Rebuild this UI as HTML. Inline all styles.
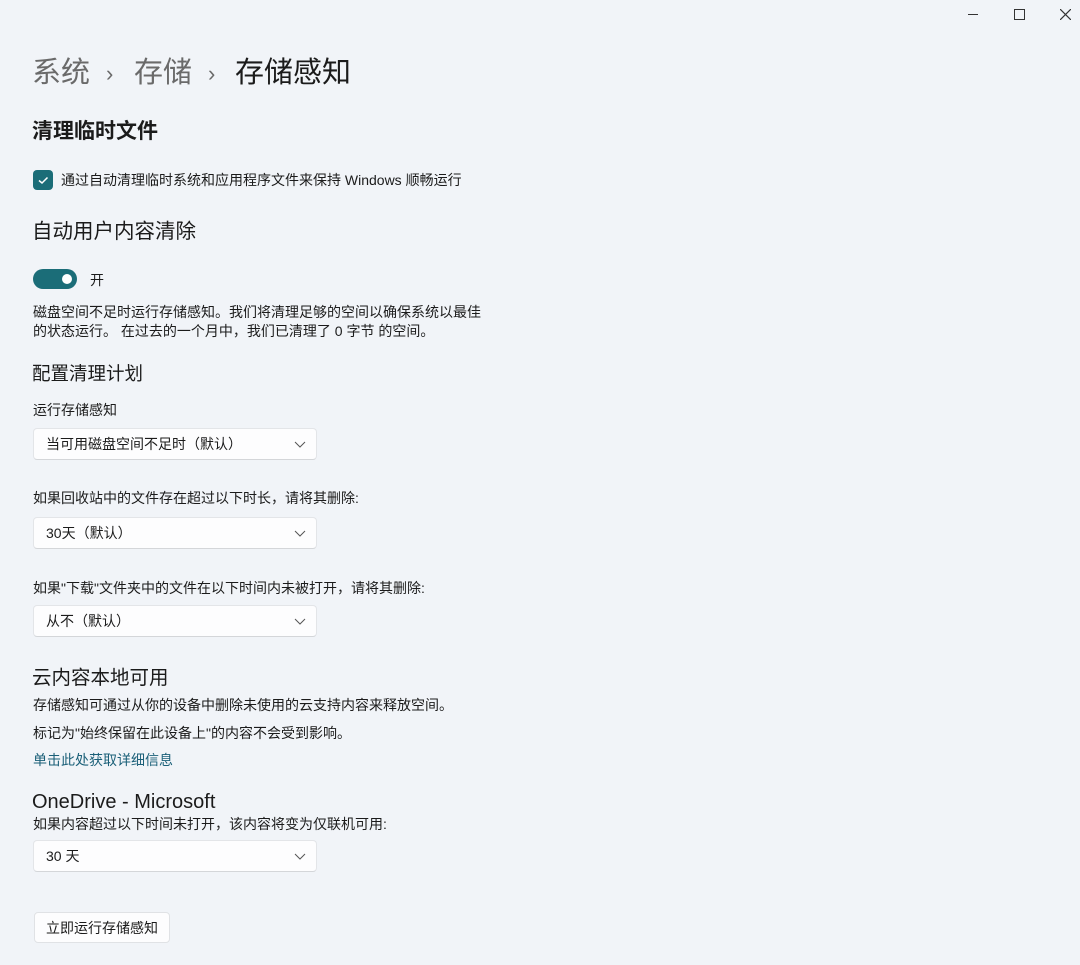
<!DOCTYPE html>
<html><head><meta charset="utf-8"><style>
body{margin:0;width:1080px;height:965px;background:#f1f4f8;font-family:"Liberation Sans","Noto Sans CJK SC",sans-serif;color:#1b1b1b;position:relative;overflow:hidden}
.a{position:absolute;white-space:nowrap;line-height:1}
.s{font-size:14px}
.dd{position:absolute;left:33px;width:284px;height:32px;background:#fdfdfe;border:1px solid #e3e5e8;border-bottom-color:#d4d6d9;border-radius:4px;font-size:14px;box-sizing:border-box;padding-left:12px;line-height:31px}
.dd svg{position:absolute;right:10px;top:12px}
</style></head><body>
<div class="a" style="left:968px;top:14px;width:10px;height:1px;background:#333"></div>
<div class="a" style="left:1014px;top:9px;width:9px;height:9px;border:1px solid #333"></div>
<svg class="a" style="left:1060px;top:9px" width="11" height="11"><path d="M0 0L11 11M11 0L0 11" stroke="#333" stroke-width="1.2"/></svg>
<div class="a" style="left:32px;top:59px;font-size:29px;color:#6a6a6a">系统</div>
<div class="a" style="left:106px;top:63px;font-size:22px;color:#6a6a6a">›</div>
<div class="a" style="left:134px;top:59px;font-size:29px;color:#6a6a6a">存储</div>
<div class="a" style="left:208px;top:63px;font-size:22px;color:#6a6a6a">›</div>
<div class="a" style="left:235px;top:59px;font-size:29px">存储感知</div>
<div class="a" style="left:32px;top:121px;font-size:21px;font-weight:bold">清理临时文件</div>
<div class="a" style="left:33px;top:170px;width:20px;height:20px;background:#1b6d78;border-radius:4px"><svg width="20" height="20"><path d="M6 10.5L9 13L14.5 7.5" stroke="#fff" stroke-width="1.5" fill="none"/></svg></div>
<div class="a s" style="left:61px;top:173px">通过自动清理临时系统和应用程序文件来保持 Windows 顺畅运行</div>
<div class="a" style="left:32px;top:222px;font-size:20.5px">自动用户内容清除</div>
<div class="a" style="left:33px;top:269px;width:44px;height:20px;background:#1b6d78;border-radius:10px"><div style="position:absolute;right:5px;top:5px;width:10px;height:10px;border-radius:5px;background:#fff"></div></div>
<div class="a s" style="left:90px;top:273px">开</div>
<div class="a s" style="left:33px;top:303px;line-height:19px">磁盘空间不足时运行存储感知。我们将清理足够的空间以确保系统以最佳<br>的状态运行。 在过去的一个月中，我们已清理了 0 字节 的空间。</div>
<div class="a" style="left:32px;top:365px;font-size:18.5px">配置清理计划</div>
<div class="a s" style="left:33px;top:403px">运行存储感知</div>
<div class="dd" style="top:428px">当可用磁盘空间不足时（默认）<svg width="12" height="8"><path d="M1 1L6 6L11 1" stroke="#555" fill="none"/></svg></div>
<div class="a s" style="left:33px;top:491px">如果回收站中的文件存在超过以下时长，请将其删除:</div>
<div class="dd" style="top:517px">30天（默认）<svg width="12" height="8"><path d="M1 1L6 6L11 1" stroke="#555" fill="none"/></svg></div>
<div class="a s" style="left:33px;top:581px">如果"下载"文件夹中的文件在以下时间内未被打开，请将其删除:</div>
<div class="dd" style="top:605px">从不（默认）<svg width="12" height="8"><path d="M1 1L6 6L11 1" stroke="#555" fill="none"/></svg></div>
<div class="a" style="left:32px;top:669px;font-size:19.5px">云内容本地可用</div>
<div class="a s" style="left:33px;top:698px">存储感知可通过从你的设备中删除未使用的云支持内容来释放空间。</div>
<div class="a s" style="left:33px;top:726px">标记为"始终保留在此设备上"的内容不会受到影响。</div>
<div class="a s" style="left:33px;top:753px;color:#1a5f78">单击此处获取详细信息</div>
<div class="a" style="left:32px;top:792px;font-size:20px">OneDrive - Microsoft</div>
<div class="a s" style="left:33px;top:817px">如果内容超过以下时间未打开，该内容将变为仅联机可用:</div>
<div class="dd" style="top:840px">30 天<svg width="12" height="8"><path d="M1 1L6 6L11 1" stroke="#555" fill="none"/></svg></div>
<div class="a s" style="left:34px;top:912px;width:136px;height:31px;background:#fdfdfe;border:1px solid #e0e2e5;border-radius:4px;box-sizing:border-box;text-align:center;line-height:30px">立即运行存储感知</div>
</body></html>
